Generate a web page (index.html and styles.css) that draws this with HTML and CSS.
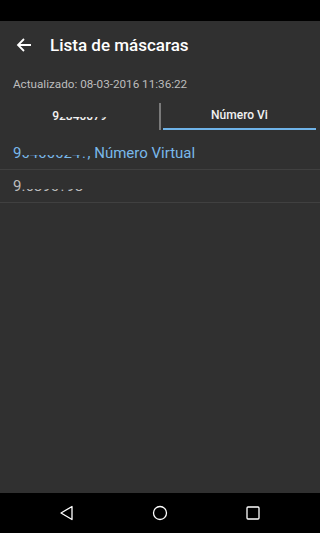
FILE: index.html
```html
<!DOCTYPE html>
<html lang="es">
<head>
<meta charset="utf-8">
<title>Lista de máscaras</title>
<link rel="stylesheet" href="styles.css">
</head>
<body>
<div class="screen">
  <div class="statusbar"></div>
  <header class="toolbar">
    <svg class="back" width="16" height="16" viewBox="0 0 16 16" aria-hidden="true">
      <path d="M15 8H2M8 2L2 8l6 6" fill="none" stroke="#fff" stroke-width="1.8"/>
    </svg>
    <h1 class="title">Lista de máscaras</h1>
  </header>
  <p class="updated">Actualizado: 08-03-2016 11:36:22</p>
  <nav class="tabs">
    <div class="tab first"><span class="masked"><span>9</span><span class="hidden-part tab-hide">2840079</span></span></div>
    <div class="sep"></div>
    <div class="tab active">Número Vi</div>
  </nav>
  <ul class="list">
    <li class="row blue"><span class="masked"><span>9</span><span class="hidden-part row1-hide">0400024?</span></span>, Número Virtual</li>
    <li class="row grey"><span class="masked"><span>9.</span><span class="hidden-part row2-hide">6890?98</span></span></li>
  </ul>
  <div class="spacer"></div>
  <footer class="navbar">
    <svg width="16" height="16" viewBox="0 0 16 16" aria-hidden="true"><path d="M13 1.5v13L2 8z" fill="none" stroke="#fff" stroke-width="1.3" stroke-linejoin="round"/></svg>
    <svg width="16" height="16" viewBox="0 0 16 16" aria-hidden="true"><circle cx="8" cy="8" r="6.5" fill="none" stroke="#fff" stroke-width="1.3"/></svg>
    <svg width="16" height="16" viewBox="0 0 16 16" aria-hidden="true"><rect x="2" y="2" width="12" height="12" rx="1" fill="none" stroke="#fff" stroke-width="1.3"/></svg>
  </footer>
</div>
</body>
</html>
```
FILE: styles.css
```css
* { box-sizing: border-box; }
html, body { margin: 0; padding: 0; }
body {
  background: #303030;
  font-family: Roboto, "Noto Sans", sans-serif;
  color: #fff;
}
.screen {
  width: 320px;
  height: 533px;
  display: flex;
  flex-direction: column;
  overflow: hidden;
}
.statusbar { height: 21px; background: #000; flex: none; }
.toolbar {
  height: 49px;
  display: flex;
  align-items: center;
  padding-left: 16px;
  flex: none;
}
.back { flex: none; margin-top: -2px; }
.title {
  margin: -2px 0 0 18px;
  font-size: 17px;
  font-weight: 500;
}
.updated {
  margin: 0;
  padding: 7px 0 0 13px;
  height: 33px;
  font-size: 11.7px;
  color: #bdbdbd;
  flex: none;
}
.tabs {
  display: flex;
  height: 27px;
  margin-right: 4px;
  flex: none;
  align-items: stretch;
}
.tab {
  display: flex;
  align-items: center;
  justify-content: center;
  font-size: 12px;
  font-weight: 500;
  color: #f2f2f2;
  padding-bottom: 2px;
}
.tab.first { width: 159px; flex: none; }
.tab.active {
  flex: 1;
  border-bottom: 2px solid #6fb3e8;
  margin-left: 2px;
}
.sep { width: 2px; background: #7a7a7a; flex: none; }
.list { list-style: none; margin: 7px 0 0; padding: 0; }
.row {
  height: 33px;
  display: flex;
  align-items: center;
  padding-left: 13px;
  font-size: 15px;
  border-bottom: 1px solid #404040;
}
.row.blue { color: #79b8ea; }
.row.grey { color: #bdbdbd; }
.masked { display: inline-flex; }
.hidden-part { position: relative; }
.hidden-part::after {
  content: "";
  position: absolute;
  left: 0; right: 0; top: 0;
  background: #303030;
}
.tab-hide::after { height: 58%; }
.row1-hide::after { height: 62%; }
.row2-hide::after { height: 68%; }
.spacer { flex: 1; }
.navbar {
  height: 40px;
  background: #000;
  display: flex;
  align-items: center;
  justify-content: space-between;
  padding: 0 59px 0 59px;
  flex: none;
}
```
